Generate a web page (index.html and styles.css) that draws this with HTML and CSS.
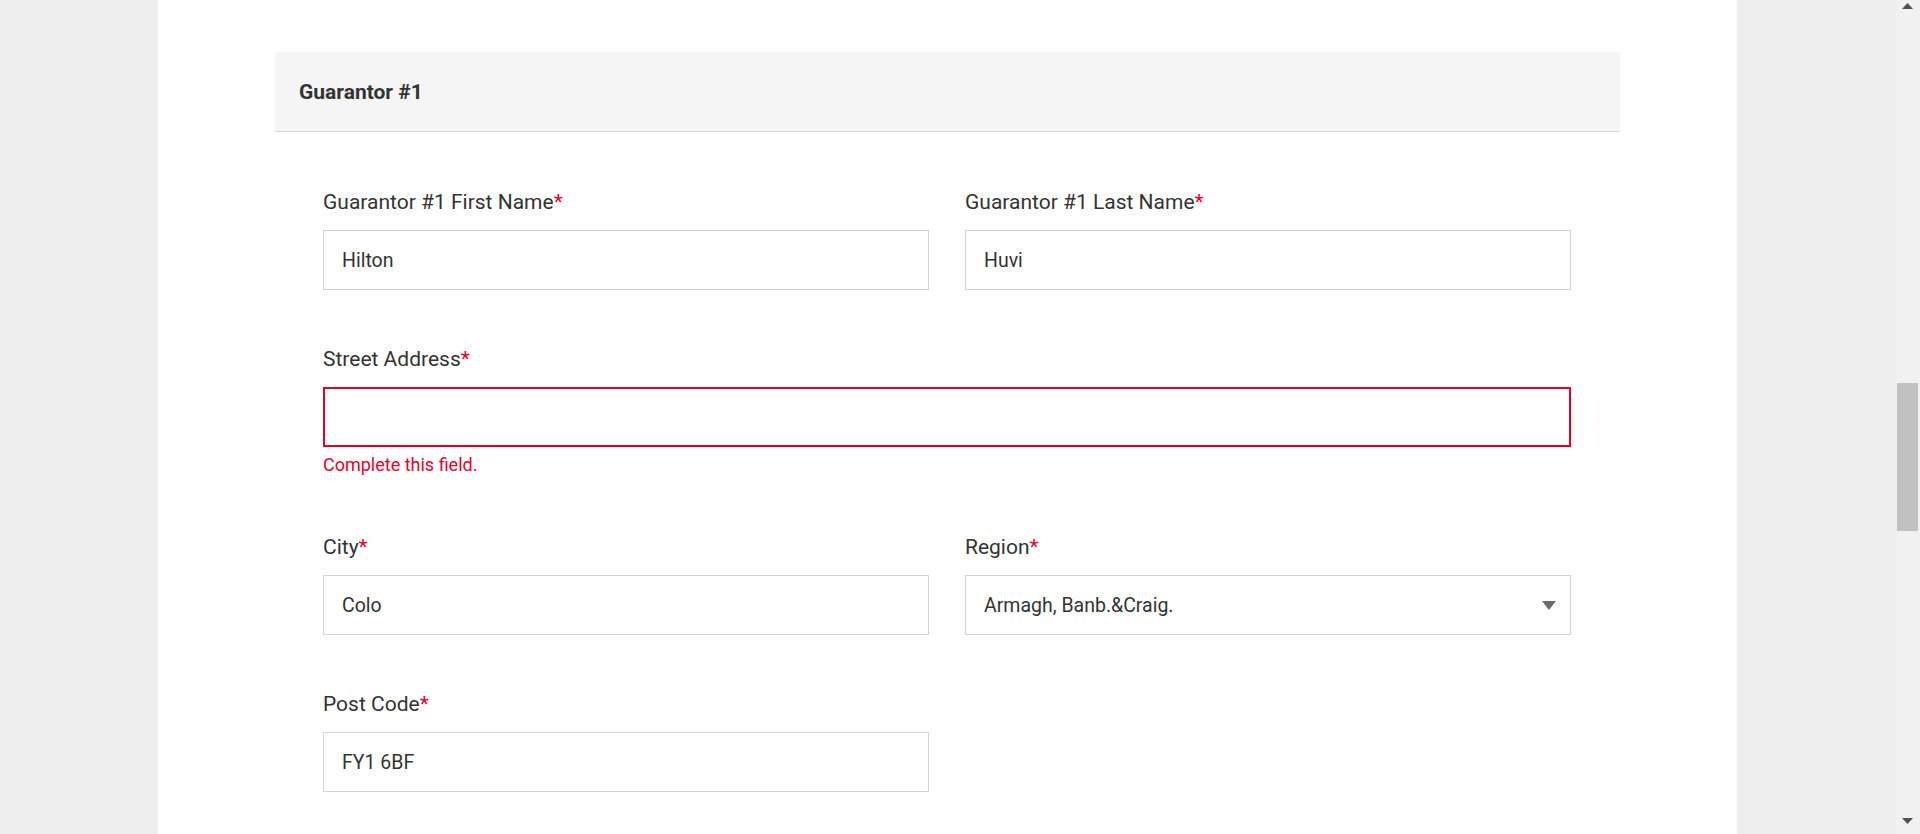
FILE: index.html
```html
<!DOCTYPE html>
<html lang="en">
<head>
<meta charset="utf-8">
<title>Guarantor</title>
<link rel="stylesheet" href="styles.css">
</head>
<body>
<div class="viewport">
  <main class="page">
    <section class="panel">
      <div class="card">
        <div class="card-header"><h2>Guarantor #1</h2></div>
        <form class="form">
          <div class="row">
            <div class="field">
              <label class="label">Guarantor #1 First Name<span class="req">*</span></label>
              <input class="input" type="text" value="Hilton">
            </div>
            <div class="field">
              <label class="label">Guarantor #1 Last Name<span class="req">*</span></label>
              <input class="input" type="text" value="Huvi">
            </div>
          </div>
          <div class="row single">
            <div class="field">
              <label class="label">Street Address<span class="req">*</span></label>
              <input class="input error" type="text" value="">
              <div class="error-msg">Complete this field.</div>
            </div>
          </div>
          <div class="row">
            <div class="field">
              <label class="label">City<span class="req">*</span></label>
              <input class="input" type="text" value="Colo">
            </div>
            <div class="field">
              <label class="label">Region<span class="req">*</span></label>
              <div class="input select">
                <span>Armagh, Banb.&amp;Craig.</span>
                <svg class="caret" width="14" height="9" viewBox="0 0 14 9"><path d="M0 0H14L7 9Z" fill="#6b6b6b"/></svg>
              </div>
            </div>
          </div>
          <div class="row">
            <div class="field">
              <label class="label">Post Code<span class="req">*</span></label>
              <input class="input" type="text" value="FY1 6BF">
            </div>
            <div class="field"></div>
          </div>
        </form>
      </div>
    </section>
  </main>
  <div class="scrollbar">
    <div class="sb-btn sb-up"><svg width="11" height="6" viewBox="0 0 11 6"><path d="M0 6H11L5.5 0Z" fill="#505050"/></svg></div>
    <div class="sb-track"><div class="sb-thumb"></div></div>
    <div class="sb-btn sb-down"><svg width="11" height="6" viewBox="0 0 11 6"><path d="M0 0H11L5.5 6Z" fill="#505050"/></svg></div>
  </div>
</div>
</body>
</html>
```
FILE: styles.css
```css
html, body {
  margin: 0;
  padding: 0;
  height: 100%;
}
body {
  font-family: Roboto, "Liberation Sans", Arial, sans-serif;
  color: #333333;
  overflow: hidden;
}
.viewport {
  display: flex;
  height: 834px;
}
.page {
  flex: 1;
  background: #eeeeee;
  display: flex;
  justify-content: center;
  overflow: hidden;
}
.panel {
  width: 1579px;
  background: #ffffff;
  padding: 52px 117px 0;
  box-sizing: border-box;
}
.card-header {
  height: 80px;
  box-sizing: border-box;
  background: #f5f5f5;
  border-bottom: 1px solid #dadada;
  display: flex;
  align-items: center;
  padding-left: 24px;
}
.card-header h2 {
  margin: 0;
  font-size: 21px;
  font-weight: 700;
  color: #333333;
}
.form {
  padding: 58px 49px 0 48px;
}
.row {
  display: grid;
  grid-template-columns: 606px 606px;
  column-gap: 36px;
  margin-bottom: 57px;
}
.row.single {
  grid-template-columns: 1248px;
}
.label {
  display: block;
  font-size: 21px;
  line-height: 24px;
  margin-bottom: 16px;
  color: #333333;
}
.req {
  color: #e4002b;
}
.input {
  display: flex;
  align-items: center;
  box-sizing: border-box;
  width: 100%;
  height: 60px;
  margin: 0;
  border: 1px solid #d4d4d4;
  border-radius: 0;
  padding: 0 18px;
  font-family: Roboto, "Liberation Sans", Arial, sans-serif;
  font-size: 19.5px;
  color: #333333;
  background: #ffffff;
  outline: none;
}
.input.error {
  border: 2px solid #e4002b;
}
.select {
  justify-content: space-between;
  padding-right: 14px;
}
.error-msg {
  color: #e4002b;
  font-size: 18px;
  line-height: 26px;
  margin-top: 5px;
}
.scrollbar {
  width: 25px;
  background: #f1f1f1;
  display: flex;
  flex-direction: column;
}
.sb-btn {
  height: 14px;
  display: flex;
  justify-content: center;
  align-items: center;
}
.sb-down {
  height: 26px;
}
.sb-up {
  align-items: flex-start;
  padding-top: 3px;
  height: 11px;
}
.sb-track {
  flex: 1;
  padding-top: 369px;
  display: flex;
  justify-content: center;
}
.sb-thumb {
  width: 21px;
  height: 148px;
  background: #c1c1c1;
}
```
